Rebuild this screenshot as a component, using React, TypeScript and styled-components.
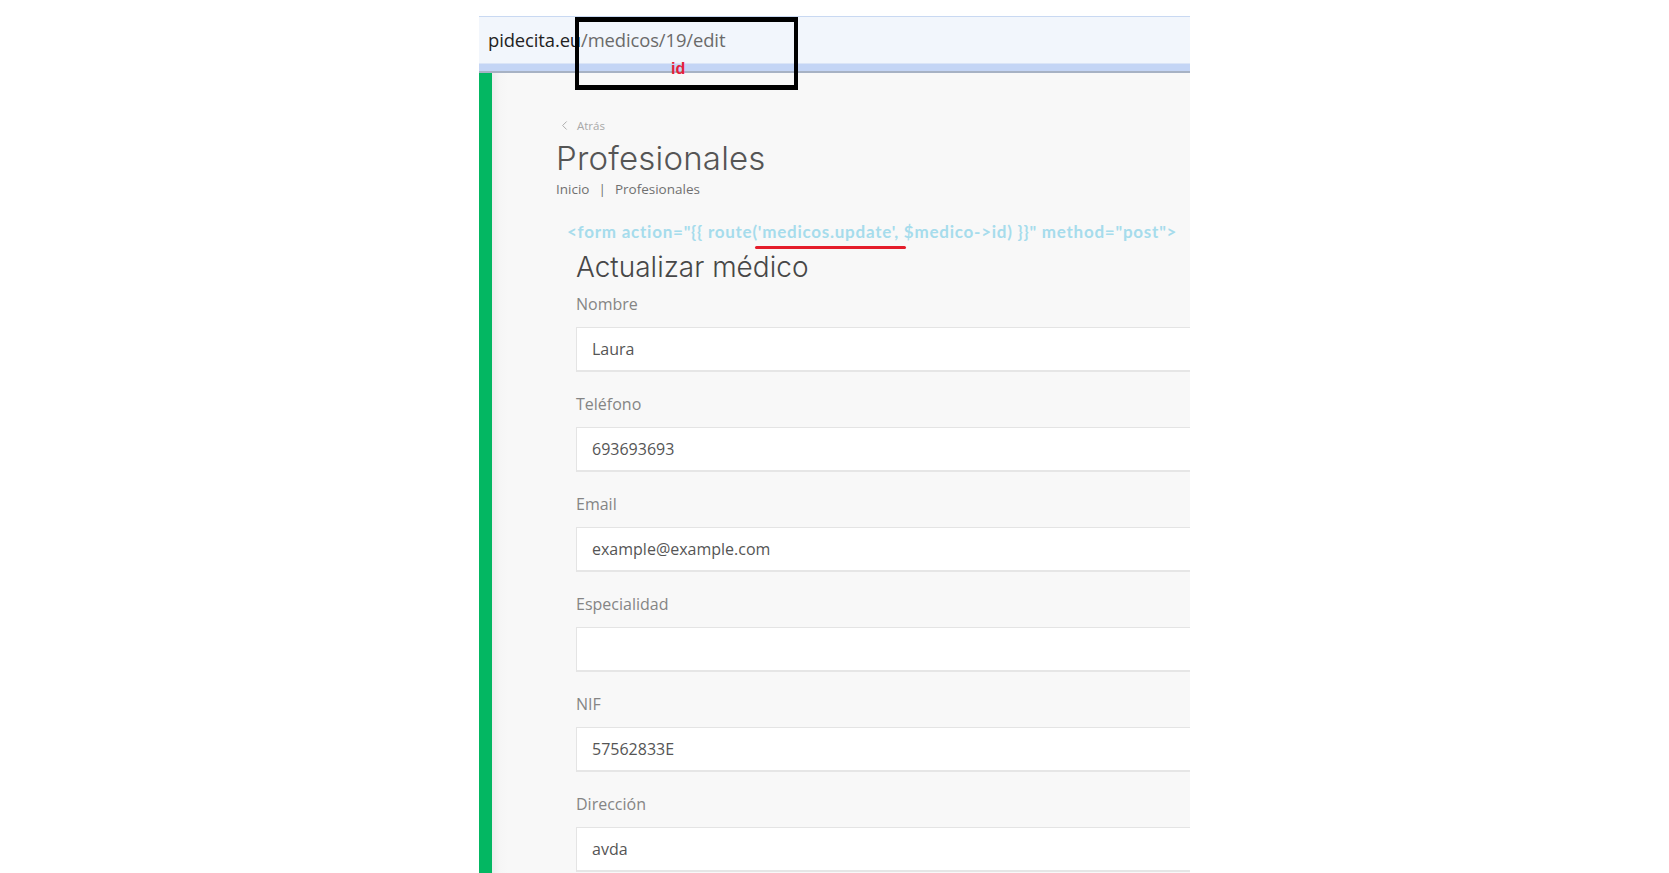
import React from "react";
import styled, { createGlobalStyle } from "styled-components";
import { ChevronLeft } from "lucide-react";

const Global = createGlobalStyle`
  html, body { margin: 0; padding: 0; background: #ffffff; }
  #root { width: 1669px; height: 873px; overflow: hidden; }
  * { box-sizing: border-box; }
`;

const Page = styled.div`
  width: 1669px;
  height: 873px;
  padding: 16px 0 0 479px;
  background: #ffffff;
`;

const Frame = styled.div`
  position: relative;
  width: 711px;
  height: 857px;
  overflow: hidden;
  display: flex;
  flex-direction: column;
  background: #f8f8f8;
`;

const AddressBar = styled.div`
  height: 47px;
  flex: none;
  display: flex;
  align-items: center;
  padding: 0 0 2px 9px;
  background: #f2f6fc;
  border-top: 1px solid #c9d9f2;
  font-family: "Open Sans", "Noto Sans", sans-serif;
  font-size: 18.4px;
  letter-spacing: -0.1px;
`;

const Host = styled.span`
  color: #222222;
`;

const PathPart = styled.span`
  color: #6a6a6a;
`;

const Strip = styled.div`
  height: 10px;
  flex: none;
  background: #c4d5f5;
  border-top: 1px solid #dbe5f7;
  border-bottom: 2px solid #a7b2c4;
`;

const Body = styled.div`
  flex: 1;
  display: flex;
  min-height: 0;
`;

const GreenBar = styled.div`
  width: 13px;
  flex: none;
  background: #03b762;
`;

const Content = styled.div`
  flex: 1;
  padding: 43px 0 0 64px;
  background: linear-gradient(to right, #ececec 0px, #f6f6f6 8px, #f8f8f8 16px);
  font-family: "Open Sans", "Noto Sans", sans-serif;
`;

const Back = styled.div`
  display: flex;
  align-items: center;
  gap: 5px;
  height: 18px;
  padding-left: 1px;
  color: #a8a8a8;
  font-size: 11.5px;
`;

const Title = styled.h1`
  margin: 4px 0 0 0;
  font-family: "Inter", "Open Sans", sans-serif;
  font-weight: 300;
  font-size: 33px;
  line-height: 40px;
  color: #555555;
  letter-spacing: 0.2px;
`;

const Crumbs = styled.div`
  display: flex;
  gap: 9px;
  margin-top: 1px;
  font-size: 13.5px;
  line-height: 20px;
  color: #707070;
`;

const CodeLine = styled.div`
  position: relative;
  margin: 23px 0 0 11px;
  font-family: "Lato", sans-serif;
  font-weight: 700;
  font-size: 17px;
  letter-spacing: 0.75px;
  line-height: 20px;
  color: #a6dcec;
  white-space: nowrap;
`;

const Underline = styled.span`
  position: absolute;
  left: 188px;
  top: 24px;
  width: 151px;
  height: 3px;
  border-radius: 2px;
  background: #e41d2b;
`;

const FormBox = styled.div`
  padding-left: 20px;
`;

const FormTitle = styled.h2`
  margin: 8px 0 0 0;
  font-family: "Inter", "Open Sans", sans-serif;
  font-weight: 300;
  font-size: 28px;
  line-height: 34px;
  color: #474747;
`;

const Field = styled.div`
  display: flex;
  flex-direction: column;
  margin-bottom: 20px;
`;

const Label = styled.label`
  font-size: 16px;
  line-height: 24px;
  color: #858585;
  margin-bottom: 11px;
`;

const Input = styled.div`
  width: 760px;
  height: 45px;
  display: flex;
  align-items: center;
  padding-left: 15px;
  background: #ffffff;
  border: 1px solid #e4e4e4;
  border-bottom: 2px solid #e6e6e6;
  font-size: 16px;
  color: #555555;
`;

const Annotation = styled.div`
  position: absolute;
  left: 96px;
  top: 1px;
  width: 223px;
  height: 73px;
  border: 4px solid #000000;
  border-top-width: 5px;
  border-bottom-width: 5px;
  pointer-events: none;
`;

const IdTag = styled.span`
  position: absolute;
  left: 192px;
  top: 44px;
  font-family: "Liberation Sans", Arial, sans-serif;
  font-weight: 700;
  font-size: 16px;
  color: #e5203a;
`;

const Spacer = styled.div`
  height: 8px;
`;

const fields: { label: string; value: string }[] = [
  { label: "Nombre", value: "Laura" },
  { label: "Teléfono", value: "693693693" },
  { label: "Email", value: "example@example.com" },
  { label: "Especialidad", value: "" },
  { label: "NIF", value: "57562833E" },
  { label: "Dirección", value: "avda" },
];

export default function App() {
  return (
    <>
      <Global />
      <Page>
        <Frame>
          <AddressBar>
            <Host>pidecita.eu</Host>
            <PathPart>/medicos/19/edit</PathPart>
          </AddressBar>
          <Strip />
          <Body>
            <GreenBar />
            <Content>
              <Back>
                <ChevronLeft size={15} strokeWidth={1.5} />
                <span>Atrás</span>
              </Back>
              <Title>Profesionales</Title>
              <Crumbs>
                <span>Inicio</span>
                <span>|</span>
                <span>Profesionales</span>
              </Crumbs>
              <CodeLine>
                {`<form action="{{ route('medicos.update', $medico->id) }}" method="post">`}
                <Underline />
              </CodeLine>
              <FormBox>
                <FormTitle>Actualizar médico</FormTitle>
                <Spacer />
                {fields.map((f) => (
                  <Field key={f.label}>
                    <Label>{f.label}</Label>
                    <Input>{f.value}</Input>
                  </Field>
                ))}
              </FormBox>
            </Content>
          </Body>
          <Annotation />
          <IdTag>id</IdTag>
        </Frame>
      </Page>
    </>
  );
}
